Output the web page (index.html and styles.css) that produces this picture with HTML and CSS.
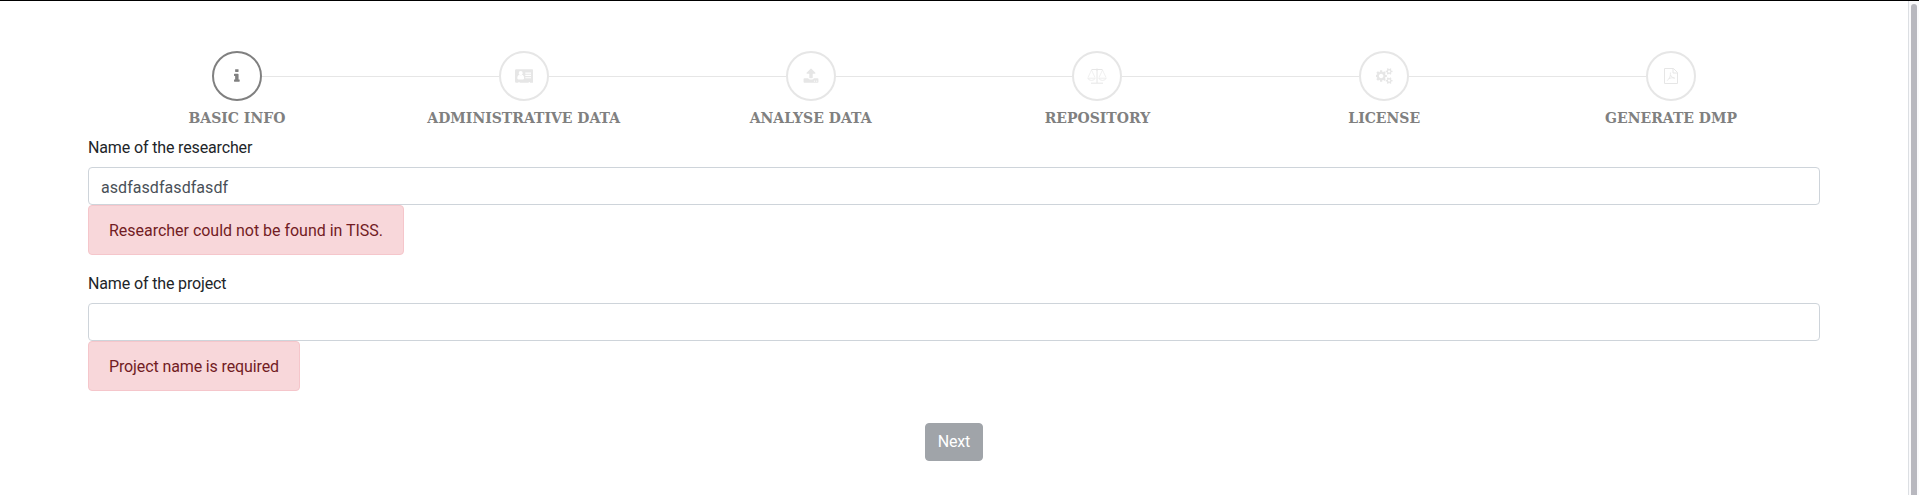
FILE: index.html
```html
<!DOCTYPE html>
<html lang="en">
<head>
<meta charset="utf-8">
<title>Basic info</title>
<link rel="stylesheet" href="styles.css">
</head>
<body>
<main class="page">
  <ol class="steps">
    <li class="step active"><span class="circle">
      <svg width="5.7" height="16" viewBox="0 0 640 1792"><path d="M640 1344v128q0 26-19 45t-45 19h-512q-26 0-45-19t-19-45v-128q0-26 19-45t45-19h64v-384h-64q-26 0-45-19t-19-45v-128q0-26 19-45t45-19h384q26 0 45 19t19 45v576h64q26 0 45 19t19 45zM512 192v192q0 26-19 45t-45 19h-256q-26 0-45-19t-19-45v-192q0-26 19-45t45-19h256q26 0 45 19t19 45z"/></svg></span>
      <span class="label">BASIC INFO</span></li>
    <li class="step"><span class="circle">
      <svg width="18.3" height="16" viewBox="0 0 2048 1792"><path fill-rule="evenodd" d="M150 128H1898q150 0 150 150V1514q0 150-150 150H1664v-96h-128v96H512v-96H384v96H150q-150 0-150-150V278q0-150 150-150zM1024 1131q0-235-150-340-30-23-74-23-75 66-160 66t-160-66q-44 0-74 23-150 105-150 340 0 149 120 149H904q120 0 120-149zM867 576a227 227 0 1 0-454 0 227 227 0 1 0 454 0zM1152 1024v128h640v-128zM1152 768v128h640V768zM1152 512v128h640V512z"/></svg></span>
      <span class="label">ADMINISTRATIVE DATA</span></li>
    <li class="step"><span class="circle">
      <svg width="16" height="16" viewBox="0 0 1792 1792"><path d="M1344 1472q0-26-19-45t-45-19-45 19-19 45 19 45 45 19 45-19 19-45zm256 0q0-26-19-45t-45-19-45 19-19 45 19 45 45 19 45-19 19-45zm128-224v320q0 40-28 68t-68 28h-1472q-40 0-68-28t-28-68v-320q0-40 28-68t68-28h427q21 56 70.5 92t110.5 36h256q61 0 110.5-36t70.5-92h427q40 0 68 28t28 68zm-325-648q-17 40-59 40h-256v448q0 26-19 45t-45 19h-256q-26 0-45-19t-19-45v-448h-256q-42 0-59-40-17-39 14-69l448-448q18-19 45-19t45 19l448 448q31 30 14 69z"/></svg></span>
      <span class="label">ANALYSE DATA</span></li>
    <li class="step"><span class="circle">
      <svg class="line-icon" width="20" height="16" viewBox="0 0 20 16"><path d="M4.500 1.500h11M10 1V15M4 15.200h12"/><path class="hair" d="M4.500 2 1 9.500M4.500 2 8 9.500M15.500 2 12 9.500M15.500 2 19 9.500"/><path d="M.8 10.200h7.400q-.6 2.200-3.700 2.200T.8 10.200zM11.800 10.200h7.400q-.6 2.200-3.700 2.200t-3.700-2.200z" stroke-width=".7"/><circle cx="10" cy="1.500" r=".7"/></svg></span>
      <span class="label">REPOSITORY</span></li>
    <li class="step"><span class="circle">
      <svg width="17.1" height="16" viewBox="0 0 1920 1792"><path d="M832 896q0-106-75-181t-181-75-181 75-75 181 75 181 181 75 181-75 75-181zm768 512q0-52-38-90t-90-38-90 38-38 90q0 53 37.5 90.5t90.500 37.500 90.500-37.500 37.500-90.500zm0-1024q0-52-38-90t-90-38-90 38-38 90q0 53 37.500 90.500t90.500 37.500 90.500-37.500 37.500-90.500zm-384 421v185q0 10-7 19.500t-16 10.500l-155 24q-11 35-32 76 34 48 90 115 7 11 7 20 0 12-7 19-23 30-82.500 89.500t-78.500 59.500q-11 0-21-7l-115-90q-37 19-77 31-11 108-23 155-7 24-30 24h-186q-11 0-20-7.500t-10-17.500l-23-153q-34-10-75-31l-118 89q-7 7-20 7-11 0-21-8-144-133-144-160 0-9 7-19 10-14 41-53t47-61q-23-44-35-82l-152-24q-10-1-17-9.500t-7-19.500v-185q0-10 7-19.500t16-10.500l155-24q11-35 32-76-34-48-90-115-7-11-7-20 0-12 7-20 22-30 82-89t79-59q11 0 21 7l115 90q34-18 77-32 11-108 23-154 7-24 30-24h186q11 0 20 7.500t10 17.500l23 153q34 10 75 31l118-89q8-7 20-7 11 0 21 8 144 133 144 160 0 8-7 19-12 16-42 54t-45 60q23 48 34 82l152 23q10 2 17 10.500t7 19.500zm640 533v140q0 16-149 31-12 27-30 52 51 113 51 138 0 4-4 7-122 71-124 71-8 0-46-47t-52-68q-20 2-30 2t-30-2q-14 21-52 68t-46 47q-2 0-124-71-4-3-4-7 0-25 51-138-18-25-30-52-149-15-149-31v-140q0-16 149-31 13-29 30-52-51-113-51-138 0-4 4-7 4-2 35-20t59-34 30-16q8 0 46 46.500t52 67.500q20-2 30-2t30 2q51-71 92-112l6-2q4 0 124 70 4 3 4 7 0 25-51 138 17 23 30 52 149 15 149 31zm0-1024v140q0 16-149 31-12 27-30 52 51 113 51 138 0 4-4 7-122 71-124 71-8 0-46-47t-52-68q-20 2-30 2t-30-2q-14 21-52 68t-46 47q-2 0-124-71-4-3-4-7 0-25 51-138-18-25-30-52-149-15-149-31v-140q0-16 149-31 13-29 30-52-51-113-51-138 0-4 4-7 4-2 35-20t59-34 30-16q8 0 46 46.500t52 67.500q20-2 30-2t30 2q51-71 92-112l6-2q4 0 124 70 4 3 4 7 0 25-51 138 17 23 30 52 149 15 149 31z"/></svg></span>
      <span class="label">LICENSE</span></li>
    <li class="step"><span class="circle">
      <svg class="line-icon" width="14" height="16" viewBox="0 0 14 16"><path d="M1 .5h8.500l4 4v11H.5V.5zM9 .5V5h4.500"/><path d="M6.400 4.500v2.200q.3 2.500 4.400 3.800M6.500 7q-.3 3-3.300 5.700M4.700 10.600q2.500-1.100 6-.8" stroke-width=".8"/></svg></span>
      <span class="label">GENERATE DMP</span></li>
  </ol>
  <form class="form">
    <div class="group">
      <label for="researcher">Name of the researcher</label>
      <input id="researcher" type="text" value="asdfasdfasdfasdf">
      <div class="alert">Researcher could not be found in TISS.</div>
    </div>
    <div class="group">
      <label for="project">Name of the project</label>
      <input id="project" type="text">
      <div class="alert short">Project name is required</div>
    </div>
    <button class="next" type="button" disabled>Next</button>
  </form>
</main>
<div class="scrollbar"><div class="thumb"></div></div>
</body>
</html>
```
FILE: styles.css
```css
* { box-sizing: border-box; }
html { height: 495px; overflow: hidden; }
body {
  margin: 0;
  height: 495px;
  overflow: hidden;
  display: flex;
  border-top: 1px solid #000;
  background: #fff;
  color: #212529;
  font: 16px/24px Roboto, sans-serif;
}
.page { flex: 1; padding: 50px 88px 0; }
.steps {
  display: flex;
  list-style: none;
  margin: 0 5.5px;
  padding: 0;
}
.step {
  flex: 1 1 0;
  display: grid;
  grid-template-columns: 1fr 50px 1fr;
  align-items: center;
  color: #e6e6e6;
}
.step::before, .step::after {
  content: "";
  height: 1px;
  margin-top: 1px;
  background: #e6e6e6;
  grid-row: 1;
}
.step::before { grid-column: 1; }
.step::after { grid-column: 3; }
.step:first-child::before, .step:last-child::after { visibility: hidden; }
.circle {
  grid-area: 1 / 2;
  width: 50px;
  height: 50px;
  border: 2px solid currentColor;
  border-radius: 50%;
  display: flex;
  align-items: center;
  justify-content: center;
}
.active .circle { color: #808080; }
.circle svg { fill: currentColor; }
.circle .line-icon { fill: none; stroke: currentColor; stroke-width: 1; }
.line-icon .hair { stroke-width: .6; }
.label {
  grid-area: 2 / 1 / auto / 4;
  margin-top: 5px;
  text-align: center;
  color: #808080;
  font: bold 14px/24px "DejaVu Serif", serif;
}
.form { display: flex; flex-direction: column; margin-top: 5px; }
.group {
  display: flex;
  flex-direction: column;
  align-items: flex-start;
  margin-bottom: 16px;
}
.group label { padding-top: 1px; margin-bottom: 7px; letter-spacing: -.14px; }
.group input {
  width: 100%;
  height: 38px;
  padding: 7px 12px 5px;
  border: 1px solid #ced4da;
  border-radius: 4px;
  color: #495057;
  font: inherit;
  letter-spacing: .06px;
}
.alert {
  padding: 13px 20px 11px;
  border: 1px solid #f5c6cb;
  border-radius: 4px;
  background: #f8d7da;
  color: #721c24;
  letter-spacing: -.02px;
}
.alert.short { letter-spacing: -.12px; }
.next {
  align-self: center;
  width: 58px;
  margin-top: 16px;
  height: 38px;
  padding: 6px 0;
  border: 1px solid #a0a4a9;
  border-radius: 4px;
  background: #a0a4a9;
  color: #fff;
  font: inherit;
  letter-spacing: -.2px;
}
.scrollbar {
  width: 11px;
  padding: 3px 2px 0;
  border-left: 1px solid #dcdfe3;
  background: #fafafc;
}
.thumb { height: 100%; width: 6px; border-radius: 3px 3px 0 0; background: #b8b8bf; }
```
